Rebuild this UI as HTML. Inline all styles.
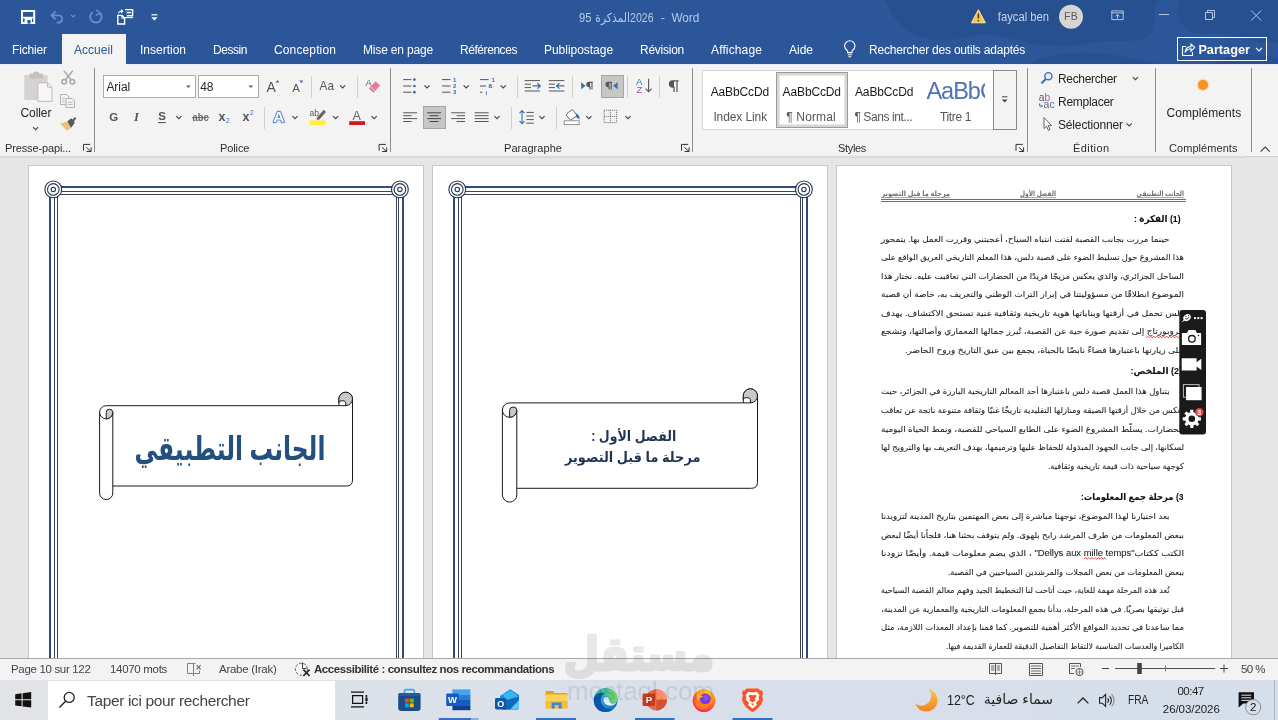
<!DOCTYPE html>
<html lang="fr">
<head>
<meta charset="utf-8">
<title>Word</title>
<style>
*{box-sizing:border-box;margin:0;padding:0}
html,body{width:1278px;height:720px;overflow:hidden;background:#e6e6e6}
body{will-change:transform;position:relative;font-family:"Liberation Sans","DejaVu Sans",sans-serif;font-size:13px;color:#262626}
.abs{position:absolute}
.t{position:absolute;white-space:nowrap;line-height:1}
svg{position:absolute;overflow:visible}
/* title bar */
#title{left:0;top:0;width:1278px;height:64px;background:#2b579a}
.tab{position:absolute;top:42px;color:#fff;font-size:12px;line-height:16px;white-space:nowrap}
#acc{left:62px;top:34px;width:64px;height:31px;background:#f3f3f3}
/* ribbon */
#ribbon{left:0;top:64px;width:1278px;height:92px;background:#f3f3f3}
#ribshadow{left:0;top:155px;width:1245px;height:3px;background:linear-gradient(#f0f0f0,#cfcfcf)}
.vsep{position:absolute;width:1px;background:#8e8e8e}
.sep{position:absolute;width:1px;background:#d0d0d0;height:22px}
.glabel{position:absolute;top:141px;font-size:11px;line-height:14px;color:#2e2e2e;white-space:nowrap}
.rt{position:absolute;font-size:12px;line-height:14px;color:#262626;white-space:nowrap}
.sty{color:#1a1a1a}
.stl{color:#555}
/* doc */
.page{position:absolute;top:165px;width:396px;height:495px;background:#fff;border:1px solid #c8c8c8}
/* status */
#status{left:0;top:659px;width:1278px;height:21px;background:#f3f3f3}
.st{position:absolute;top:662px;font-size:11.5px;line-height:14px;color:#444;white-space:nowrap}
/* taskbar */
#task{left:0;top:680px;width:1278px;height:40px;background:linear-gradient(90deg,#e2e3e6 0,#dce1e9 30%,#d8dfea 60%,#d6deea 100%)}
</style>
</head>
<body>
<!-- TITLE BAR -->
<div id="title" class="abs"></div>
<svg class="abs" style="left:0;top:0" width="1278" height="64" viewBox="0 0 1278 64">
<!-- decorative swirls -->
<g fill="#234a88" opacity="0.5">
<path d="M885 0C892 18 905 36 935 40C960 43 975 30 1000 36C1030 44 1060 50 1090 43C1112 38 1140 46 1150 34C1158 24 1150 8 1160 0Z"/>
<path d="M1180 0C1172 20 1185 37 1210 34C1235 31 1250 46 1278 42V0Z"/>
<path d="M1030 64C1045 52 1090 50 1120 56C1140 60 1152 62 1160 64Z"/>
<path d="M1215 64C1225 54 1255 52 1278 58V64Z"/>
</g>
<!-- save -->
<path d="M22 11H34.2V23H22Z" fill="none" stroke="#fff" stroke-width="2"/>
<rect x="23" y="16.8" width="10.2" height="1.6" fill="#fff"/>
<rect x="24.6" y="18" width="7.4" height="5.4" fill="#fff"/><rect x="27.4" y="20" width="3.2" height="3.6" fill="#2b579a"/>
<!-- undo / redo (disabled) -->
<g fill="none" stroke="#6a8dcb" stroke-width="1.9">
<path d="M52 15.4H58.6A3.6 3.6 0 0 1 58.6 22.6H56.6"/>
<path d="M55.6 11.4L51.6 15.4L55.6 19.4"/>
<path d="M71 14.8L73.2 17L75.4 14.8" stroke-width="1.2"/>
<path d="M100.4 13.4A5.7 5.7 0 1 1 92.6 12.2"/>
<path d="M96.2 9.8L100.6 13.2L95.8 15.2" stroke-width="1.6"/>
</g>
<!-- touch/mouse mode icon -->
<g fill="none" stroke="#fff" stroke-width="1.4">
<path d="M125 9.6H132.6V15.8H126.8"/>
<path d="M126.6 12.6H131" stroke-width="1.6"/>
<path d="M117.8 15.4H122L124.6 18V24H117.8Z" fill="#2b579a"/>
<path d="M121.8 15.6V18.2H124.4" stroke-width="1"/>
<path d="M118.6 13.6C118.6 11.8 120 11 122.4 11.2M121 9.6L122.8 11.2L121 12.8" stroke-width="1.1"/>
<path d="M125 17.6H133" stroke-width="1.1"/>
</g>
<!-- customize -->
<path d="M151.4 14.8H157.4" stroke="#fff" stroke-width="1.2"/>
<path d="M151.2 17.2H157.6L154.4 20.4Z" fill="#fff"/>
<!-- title -->
<g font-family="'Liberation Sans','DejaVu Sans',sans-serif" font-size="12.5" fill="#b9c9e8">
<text x="579" y="21.9" textLength="12.4" lengthAdjust="spacingAndGlyphs">95</text>
<text x="630" y="21.9" direction="rtl" textLength="34.7" lengthAdjust="spacingAndGlyphs">المذكرة</text>
<text x="630" y="21.9" textLength="23.6" lengthAdjust="spacingAndGlyphs">2026</text>
<text x="660.8" y="21.9">-</text>
<text x="671.4" y="21.9" textLength="27.8" lengthAdjust="spacingAndGlyphs">Word</text>
<text x="997.8" y="20.6" font-size="12.5" textLength="51.2" lengthAdjust="spacingAndGlyphs" fill="#c6d2ea">faycal ben</text>
</g>
<!-- warning -->
<path d="M978.4 9.8L985.4 22.8H971.4Z" fill="#f7c353" stroke="#fbe3a6" stroke-width="1" stroke-linejoin="round"/>
<path d="M978.4 13.6V18.6M978.4 20V21.4" stroke="#4a3a10" stroke-width="1.5"/>
<!-- avatar -->
<circle cx="1071" cy="16.7" r="12" fill="#d8d4d1"/>
<text x="1071" y="20.4" font-family="'Liberation Sans',sans-serif" font-size="10.5" fill="#5a5a5a" text-anchor="middle" letter-spacing="0.3">FB</text>
<!-- ribbon display -->
<g fill="none" stroke="#b4c4e3" stroke-width="1">
<path d="M1111.8 10.9H1123.2V19.6H1111.8Z"/><path d="M1111.8 12.9H1123.2"/>
<path d="M1117.5 18.6V14.6M1115.4 16.5L1117.5 14.4L1119.6 16.5"/>
<!-- window controls -->
<path d="M1159 14.5H1169"/>
<path d="M1205.5 12.5H1212.5V19.5H1205.5Z"/><path d="M1207.5 12.5V10.5H1214.5V17.5H1212.5"/>
<path d="M1251.2 10.5L1261.2 20.5M1261.2 10.5L1251.2 20.5"/>
</g>
<!-- bulb -->
<g fill="none" stroke="#fff" stroke-width="1.1">
<path d="M847.6 52.6V51C845.6 49.6 844.6 48 844.6 46A5.2 5.2 0 0 1 855 46C855 48 854 49.6 852 51V52.6Z"/>
<path d="M847.8 54.8H851.8M848.4 56.8H851.2"/>
</g>
<!-- partager -->
<rect x="1177.5" y="37.5" width="89" height="23" fill="none" stroke="#fff" stroke-width="1"/>
<g fill="none" stroke="#fff" stroke-width="1.1">
<path d="M1186 46.5H1182.5V55.5H1192.5V52"/>
<path d="M1185 52.5C1185.5 48.5 1188 46.6 1191 46.6V44L1194.6 47.6L1191 51.2V48.8C1188.6 48.8 1186.6 49.8 1185 52.5Z"/>
<path d="M1256 47.8L1259 50.8L1262 47.8" stroke-width="1.2"/>
</g>
<text x="1198.4" y="53.6" font-family="'Liberation Sans',sans-serif" font-size="13.5" font-weight="bold" fill="#fff" textLength="51.5" lengthAdjust="spacingAndGlyphs">Partager</text>
</svg>
<!-- TABS -->
<div id="acc" class="abs"></div>
<div class="tab" style="left:12px;letter-spacing:-0.15px">Fichier</div>
<div class="tab" style="left:74px;color:#2b579a;letter-spacing:0.04px">Accueil</div>
<div class="tab" style="left:140px;letter-spacing:-0.00px">Insertion</div>
<div class="tab" style="left:213px;letter-spacing:-0.45px">Dessin</div>
<div class="tab" style="left:274px;letter-spacing:0.13px">Conception</div>
<div class="tab" style="left:363px;letter-spacing:-0.17px">Mise en page</div>
<div class="tab" style="left:460px;letter-spacing:-0.44px">Références</div>
<div class="tab" style="left:544px;letter-spacing:-0.03px">Publipostage</div>
<div class="tab" style="left:640px;letter-spacing:-0.25px">Révision</div>
<div class="tab" style="left:711px;letter-spacing:0.13px">Affichage</div>
<div class="tab" style="left:789px;letter-spacing:-0.01px">Aide</div>
<div class="tab" style="left:869px;letter-spacing:-0.21px">Rechercher des outils adaptés</div>
<!-- RIBBON -->
<div id="ribbon" class="abs"></div>
<div id="ribshadow" class="abs"></div><div class="abs" style="left:1245px;top:156px;width:33px;height:1px;background:#d0d0d0"></div>
<div class="abs" style="left:0;top:64px;width:62px;height:1px;background:#e6edf8"></div><div class="abs" style="left:126px;top:64px;width:1152px;height:1px;background:#e6edf8"></div>
<!-- group separators -->
<div class="vsep" style="left:94px;top:68px;height:84px"></div>
<div class="vsep" style="left:390px;top:68px;height:84px"></div>
<div class="vsep" style="left:692px;top:68px;height:84px"></div>
<div class="vsep" style="left:1027px;top:68px;height:84px"></div>
<div class="vsep" style="left:1155px;top:68px;height:84px"></div>
<div class="vsep" style="left:1251px;top:68px;height:84px"></div>
<!-- group labels -->
<div class="glabel" style="left:5px;letter-spacing:-0.13px">Presse-papi...</div>
<div class="glabel" style="left:220px;letter-spacing:-0.11px">Police</div>
<div class="glabel" style="left:504px;letter-spacing:0.05px">Paragraphe</div>
<div class="glabel" style="left:838px;letter-spacing:-0.33px">Styles</div>
<div class="glabel" style="left:1073px;letter-spacing:0.41px">Édition</div>
<div class="glabel" style="left:1169px;letter-spacing:0.06px">Compléments</div>
<div class="sep" style="left:310.5px;top:76px"></div>
<div class="sep" style="left:356.5px;top:76px"></div>
<div class="sep" style="left:517px;top:76px"></div>
<div class="sep" style="left:571.5px;top:76px"></div>
<div class="sep" style="left:626.5px;top:76px"></div>
<div class="sep" style="left:658.5px;top:76px"></div>
<div class="sep" style="left:264px;top:107px"></div>
<div class="sep" style="left:511px;top:107px"></div>
<div class="sep" style="left:555.5px;top:107px"></div>
<!-- clipboard -->
<div class="rt" style="left:20.5px;top:105.8px;letter-spacing:-0.09px">Coller</div>
<!-- font combos -->
<div class="abs" style="left:103px;top:75px;width:93px;height:23px;background:#fff;border:1px solid #ababab"></div>
<div class="abs" style="left:198px;top:75px;width:61px;height:23px;background:#fff;border:1px solid #ababab"></div>
<div class="rt" style="left:106.4px;top:79.6px;letter-spacing:-0.04px">Arial</div>
<div class="rt" style="left:200.3px;top:79.6px;letter-spacing:-0.18px">48</div>
<!-- selected buttons -->
<div class="abs" style="left:601px;top:75px;width:23px;height:23px;background:#c6c6c6;border:1px solid #a6a6a6"></div>
<div class="abs" style="left:423px;top:106px;width:23px;height:23px;background:#c6c6c6;border:1px solid #a6a6a6"></div>
<!-- styles gallery -->
<div class="abs" style="left:702px;top:70px;width:315px;height:60px;background:#fff;border:1px solid #d6d6d6"></div>
<div class="abs" style="left:776px;top:72px;width:72px;height:56px;background:#fff;border:1px solid #9a9a9a;box-shadow:inset 0 0 0 2.6px #d6d6d6"></div>
<div class="abs" style="left:993px;top:70px;width:24px;height:60px;background:#f3f3f3;border:1px solid #8a8a8a"></div>
<div class="rt sty" style="left:710.7px;top:84.7px;letter-spacing:-0.13px">AaBbCcDd</div>
<div class="rt sty" style="left:782.6px;top:84.7px;letter-spacing:-0.13px">AaBbCcDd</div>
<div class="rt sty" style="left:855px;top:84.7px;letter-spacing:-0.13px">AaBbCcDd</div>
<div class="rt" style="left:926.4px;top:76.5px;font-size:23.5px;line-height:28px;color:#4f72b3;width:59px;overflow:hidden;letter-spacing:-1px">AaBbC</div>
<div class="rt stl" style="left:713.4px;top:109.5px;letter-spacing:-0.10px">Index Link</div>
<div class="rt stl" style="left:786.3px;top:109.5px;letter-spacing:0.13px">¶ Normal</div>
<div class="rt stl" style="left:854.4px;top:109.5px;letter-spacing:-0.42px">¶ Sans int...</div>
<div class="rt stl" style="left:940px;top:109.5px;letter-spacing:-0.34px">Titre 1</div>
<!-- edition -->
<div class="rt" style="left:1058px;top:71.5px;letter-spacing:-0.34px">Rechercher</div>
<div class="rt" style="left:1058px;top:94.8px;letter-spacing:-0.28px">Remplacer</div>
<div class="rt" style="left:1058px;top:117.6px;letter-spacing:-0.16px">Sélectionner</div>
<!-- complements -->
<div class="abs" style="left:1198px;top:80px;width:10px;height:10px;border-radius:50%;background:#f7941d;box-shadow:0 0 2px #f7941d"></div>
<div class="rt" style="left:1166.5px;top:106px;letter-spacing:0.07px">Compléments</div>
<svg class="abs" style="left:0;top:64px" width="1278" height="94" viewBox="0 64 1278 94">
<g font-family="'Liberation Sans',sans-serif">
<rect x="24.2" y="75" width="23.4" height="25" rx="1.2" fill="#d6d2d2"/>
<path d="M29.6 73.6H33.4V72.6A1 1 0 0 1 34.4 71.8H38A1 1 0 0 1 39 72.6V73.6H42.8V78.4H29.6Z" fill="#c4c0c0"/>
<path d="M37.8 82.8H47.6L52 87.2V101.4H37.8Z" fill="#f7f5f5" stroke="#bdbaba" stroke-width="1"/>
<path d="M47.6 82.8V87.2H52" fill="none" stroke="#bdbaba" stroke-width="1"/>
<path d="M33.0 127.10000000000001L35.6 129.70000000000002L38.2 127.10000000000001" fill="none" stroke="#444" stroke-width="1.1"/>
<g fill="none" stroke="#aaa7a7" stroke-width="1.5"><path d="M63.8 70.6L71.2 80M72.8 70.6L65.4 80"/><circle cx="64.2" cy="81.8" r="2.3"/><circle cx="72.4" cy="81.8" r="2.3"/></g>
<g fill="#f5f3f3" stroke="#b3b0b0" stroke-width="1"><path d="M60.5 94.5H66.5L69 97V104.5H60.5Z"/><path d="M62 98H65M62 100H64.5M62 102H64.5" stroke="#c2bfbf"/><path d="M66 98.5H72L74.6 101.2V107.5H66Z"/><path d="M67.8 102.4H72.8M67.8 104.6H72.8" stroke="#bdbaba"/></g>
<path d="M67.2 121.4L71.2 118.2L72.6 119.6L75 117L76.4 118.6L73.8 121.2L74.8 122.8L71 128Z" fill="#5c5a5a"/>
<path d="M60 123.5L67.2 121.4L71 128L67 130.7Z" fill="#e9c27c"/>
<path d="M83.5 150.7V144.4H90.2M86.4 147.4L91.0 151.4M91.1 147.3V151.5H86.6" fill="none" stroke="#333" stroke-width="1"/>
<path d="M185.8 85.4H190.8L188.3 88Z" fill="#666"/><path d="M248.4 85.4H253.4L250.9 88Z" fill="#666"/>
<text x="266.6" y="92.2" font-size="14" fill="#555">A</text><path d="M275.4 82.6H279.6L277.5 80Z" fill="#3a6db3"/>
<text x="292.2" y="92.2" font-size="11.5" fill="#555">A</text><path d="M299.2 80.4H303.4L301.3 83Z" fill="#3a6db3"/>
<text x="319.6" y="89.8" font-size="13" fill="#555" textLength="14.4" lengthAdjust="spacingAndGlyphs">Aa</text><path d="M340.0 85.3L342.6 87.89999999999999L345.20000000000005 85.3" fill="none" stroke="#444" stroke-width="1.1"/>
<text x="365.6" y="86.4" font-size="9.5" fill="#666">A</text>
<path d="M375.6 81.2L380.2 85.4L373.4 92.8L368.8 88.6Z" fill="#e9799c"/><path d="M370.6 86.8L375 91" stroke="#f6c6d4" stroke-width="1"/>
<text x="109.2" y="121" font-size="11.5" font-weight="bold" fill="#555">G</text>
<text x="134" y="121" font-size="12.5" font-style="italic" font-weight="bold" font-family="'Liberation Serif',serif" fill="#555">I</text>
<text x="158.2" y="120.4" font-size="11.5" font-weight="bold" fill="#555">S</text><path d="M158 122.6H165.8" stroke="#555" stroke-width="1.1"/><path d="M176.20000000000002 116.10000000000001L178.8 118.7L181.4 116.10000000000001" fill="none" stroke="#444" stroke-width="1.1"/>
<text x="192.6" y="121" font-size="11" font-weight="bold" fill="#6a6a6a" textLength="16" lengthAdjust="spacingAndGlyphs">abc</text><path d="M192 117.6H209.2" stroke="#6a6a6a" stroke-width="1"/>
<text x="218.4" y="121" font-size="12.5" font-weight="bold" fill="#555">x</text><text x="226" y="123.4" font-size="6.5" fill="#3a6db3">2</text>
<text x="242.4" y="121" font-size="12.5" font-weight="bold" fill="#555">x</text><text x="250" y="115.4" font-size="6.5" fill="#3a6db3">2</text>
<text x="273.2" y="122.4" font-size="15.5" font-weight="bold" fill="none" stroke="#a9c8ee" stroke-width="3.4" opacity="0.6" stroke-linejoin="round">A</text><text x="273.2" y="122.4" font-size="15.5" font-weight="bold" fill="#fff" stroke="#3f76c2" stroke-width="1.5" stroke-linejoin="round" style="paint-order:stroke">A</text><path d="M292.4 116.10000000000001L295 118.7L297.6 116.10000000000001" fill="none" stroke="#444" stroke-width="1.1"/>
<text x="309.6" y="116.4" font-size="8.5" fill="#555">ab</text>
<path d="M323.8 109.8L326 112L319.4 119.4L316.6 120L317.2 117.2Z" fill="#666"/>
<rect x="309.6" y="120.4" width="15.6" height="4.8" fill="#ffef3a"/><path d="M333.0 116.10000000000001L335.6 118.7L338.20000000000005 116.10000000000001" fill="none" stroke="#444" stroke-width="1.1"/>
<text x="352.4" y="120" font-size="12.5" fill="#666">A</text><rect x="349.2" y="121.2" width="15.8" height="3.8" fill="#d0191f"/><path d="M371.59999999999997 116.10000000000001L374.2 118.7L376.8 116.10000000000001" fill="none" stroke="#444" stroke-width="1.1"/>
<path d="M379.1 150.7V144.4H385.8M382.0 147.4L386.6 151.4M386.7 147.3V151.5H382.2" fill="none" stroke="#333" stroke-width="1"/>
<path d="M403.2 79.6H411.4M403.2 86H411.4M403.2 92.2H411.4" fill="none" stroke="#555" stroke-width="1"/>
<circle cx="414.4" cy="79.6" r="1.35" fill="#3a6db3"/><circle cx="414.4" cy="86" r="1.35" fill="#3a6db3"/><circle cx="414.4" cy="92.2" r="1.35" fill="#3a6db3"/><path d="M424.4 85.3L427 87.89999999999999L429.6 85.3" fill="none" stroke="#444" stroke-width="1.1"/>
<path d="M442 79.6H450.6M442 86H450.6M442 92.2H450.6" fill="none" stroke="#555" stroke-width="1"/>
<text x="453" y="81.8" font-size="6" font-weight="bold" fill="#3a6db3">1</text><text x="453" y="88.2" font-size="6" font-weight="bold" fill="#3a6db3">2</text><text x="453" y="94.4" font-size="6" font-weight="bold" fill="#3a6db3">3</text><path d="M463.59999999999997 85.3L466.2 87.89999999999999L468.8 85.3" fill="none" stroke="#444" stroke-width="1.1"/>
<path d="M480 79.6H488.6M480 86H486M480 92.2H482.4" fill="none" stroke="#555" stroke-width="1"/>
<text x="491.4" y="82" font-size="6" font-weight="bold" fill="#3a6db3">1</text><text x="488.6" y="88.4" font-size="6.5" font-weight="bold" fill="#3a6db3">a</text><text x="485.4" y="94.6" font-size="6" font-weight="bold" fill="#3a6db3">i</text><path d="M500.59999999999997 85.3L503.2 87.89999999999999L505.8 85.3" fill="none" stroke="#444" stroke-width="1.1"/>
<path d="M524.6 80.6H540M524.6 84.2H531M524.6 87.6H531M524.6 91H540" fill="none" stroke="#555" stroke-width="1"/>
<path d="M532.4 85.9H540M537.4 83.2L540.2 85.9L537.4 88.6" fill="none" stroke="#3a6db3" stroke-width="1.3"/>
<path d="M548.8 80.6H564.4M548.8 84.2H555M548.8 87.6H555M548.8 91H564.4" fill="none" stroke="#555" stroke-width="1"/>
<path d="M556.6 85.9H564.4M559.4 83.2L556.6 85.9L559.4 88.6" fill="none" stroke="#3a6db3" stroke-width="1.3"/>
<path d="M581.2 82.2L585.6 85.7L581.2 89.2Z" fill="#3a6db3"/>
<path d="M592.8 82.4H589A2.2 2.2 0 0 0 589 86.8H590V89.6M592 82.4V89.6" fill="none" stroke="#555" stroke-width="1.1"/><path d="M589 82.6A2 2 0 0 0 589 86.6H590V82.6Z" fill="#555"/>
<path d="M612 82.4H608.2A2.2 2.2 0 0 0 608.2 86.8H609.2V89.6M611.2 82.4V89.6" fill="none" stroke="#555" stroke-width="1.1"/><path d="M608.2 82.6A2 2 0 0 0 608.2 86.6H609.2V82.6Z" fill="#555"/>
<path d="M617.6 82.2L613.2 85.7L617.6 89.2Z" fill="#3a6db3"/>
<text x="636" y="85.2" font-size="9.5" fill="#3a6db3">A</text><text x="636.4" y="93.2" font-size="9.5" fill="#9a55a8">Z</text>
<path d="M648.6 78.8V91.6M645.6 88.6L648.6 91.8L651.6 88.6" fill="none" stroke="#555" stroke-width="1.1"/>
<path d="M678.6 80.8H672.6A3.2 3.2 0 0 0 672.6 87.2H674V92M677 80.8V92" fill="none" stroke="#555" stroke-width="1.2"/><path d="M672.6 81A3 3 0 0 0 672.6 87H674V81Z" fill="#555"/>
<path d="M403.2 112.8H417M403.2 115.7H411.6M403.2 118.6H417M403.2 121.5H411.6" fill="none" stroke="#555" stroke-width="1"/>
<path d="M427.2 112.8H441M429.6 115.7H438.6M427.2 118.6H441M429.6 121.5H438.6" fill="none" stroke="#444" stroke-width="1"/>
<path d="M451.2 112.8H465M456.6 115.7H465M451.2 118.6H465M456.6 121.5H465" fill="none" stroke="#555" stroke-width="1"/>
<path d="M474.6 112.8H488.6M474.6 115.7H488.6M474.6 118.6H488.6M474.6 121.5H488.6" fill="none" stroke="#555" stroke-width="1"/><path d="M494.4 116.10000000000001L497 118.7L499.6 116.10000000000001" fill="none" stroke="#444" stroke-width="1.1"/>
<path d="M522 110.8V123.6M519.6 113.2L522 110.6L524.4 113.2M519.6 121.2L522 123.8L524.4 121.2" fill="none" stroke="#3a6db3" stroke-width="1.1"/>
<path d="M526.4 112.4H533.8M526.4 116H533.8M526.4 119.6H533.8M526.4 123.2H533.8" fill="none" stroke="#555" stroke-width="1"/><path d="M539.4 116.10000000000001L542 118.7L544.6 116.10000000000001" fill="none" stroke="#444" stroke-width="1.1"/>
<path d="M568.4 112.4L572.6 109.6L577.2 115.6L570.4 120.2L566.2 115Z" fill="#fff" stroke="#666" stroke-width="1"/>
<path d="M576.4 113.2C578.6 114.6 580 116.6 579.6 119.6C578.4 118.4 577.4 117.6 576 117.2Z" fill="#3a6db3"/>
<rect x="564.2" y="120.8" width="15" height="3.8" fill="#fff" stroke="#888" stroke-width="0.9"/><path d="M586.1999999999999 116.10000000000001L588.8 118.7L591.4 116.10000000000001" fill="none" stroke="#444" stroke-width="1.1"/>
<path d="M604.2 110.2H616.6V122.6H604.2ZM610.4 110.2V122.6M604.2 116.4H616.6" fill="none" stroke="#666" stroke-width="1" stroke-dasharray="1 1"/><path d="M625.4 116.10000000000001L628 118.7L630.6 116.10000000000001" fill="none" stroke="#444" stroke-width="1.1"/>
<path d="M681.5 150.7V144.4H688.2M684.4 147.4L689.0 151.4M689.1 147.3V151.5H684.6" fill="none" stroke="#333" stroke-width="1"/>
<path d="M1002 96.8H1007.4" stroke="#444" stroke-width="1"/><path d="M1001.8 99.4H1007.6L1004.7 102.4Z" fill="#444"/>
<path d="M1016.0 150.7V144.4H1022.7M1018.9 147.4L1023.5 151.4M1023.6 147.3V151.5H1019.1" fill="none" stroke="#333" stroke-width="1"/>
<circle cx="1048.4" cy="76.2" r="3.6" fill="#e4eefa" stroke="#3a6db3" stroke-width="1.4"/><path d="M1045.8 79L1041.4 83.4" stroke="#3a6db3" stroke-width="2"/><path d="M1132.8000000000002 77.10000000000001L1135.4 79.7L1138.0 77.10000000000001" fill="none" stroke="#444" stroke-width="1.1"/>
<text x="1038.8" y="100.6" font-size="10.5" fill="#5a5a5a" textLength="11.4" lengthAdjust="spacingAndGlyphs">a<tspan fill="#9a5fb0">b</tspan></text><text x="1043.6" y="108.4" font-size="10.5" fill="#6a5a5a" textLength="11" lengthAdjust="spacingAndGlyphs">a<tspan fill="#3a6db3">c</tspan></text><path d="M1039.6 103.4V106H1042.2M1041 104.6L1042.4 106L1041 107.4" fill="none" stroke="#3a6db3" stroke-width="0.9"/>
<path d="M1044 117.6V128.6L1046.6 126.2L1048.4 130.4L1050 129.6L1048.2 125.6H1051.6Z" fill="#fff" stroke="#555" stroke-width="0.9"/><path d="M1126.6000000000001 123.3L1129.2 125.89999999999999L1131.8 123.3" fill="none" stroke="#444" stroke-width="1.1"/>
<path d="M1260.6 151.6L1265.2 147L1269.8 151.6" fill="none" stroke="#444" stroke-width="1.1"/>
</g></svg>

<!-- DOC -->
<div class="page" style="left:28px" id="p1"></div>
<div class="page" style="left:432px" id="p2"></div>
<div class="page" style="left:836px" id="p3"></div>
<svg class="abs" style="left:0;top:0" width="1278" height="660" viewBox="0 0 1278 660">
<g fill="none">
<path d="M50 665V187H403V665" stroke="#2f4b7b" stroke-width="2"/>
<path d="M54.5 665V191.5H398.5V665" stroke="#3a4358" stroke-width="1"/>
<path d="M57.5 665V194.5H396.5V665" stroke="#3a4358" stroke-width="1"/>
<circle cx="53.3" cy="189.4" r="8.4" fill="#fff" stroke="#283552" stroke-width="1.1"/>
<circle cx="53.3" cy="189.4" r="5.8" stroke="#283552" stroke-width="1.1"/>
<circle cx="53.3" cy="189.4" r="2.2" stroke="#283552" stroke-width="1.1"/>
<circle cx="399.9" cy="189.4" r="8.4" fill="#fff" stroke="#283552" stroke-width="1.1"/>
<circle cx="399.9" cy="189.4" r="5.8" stroke="#283552" stroke-width="1.1"/>
<circle cx="399.9" cy="189.4" r="2.2" stroke="#283552" stroke-width="1.1"/>
</g>
<g fill="none">
<path d="M454 665V187H807V665" stroke="#2f4b7b" stroke-width="2"/>
<path d="M458.5 665V191.5H802.5V665" stroke="#3a4358" stroke-width="1"/>
<path d="M461.5 665V194.5H800.5V665" stroke="#3a4358" stroke-width="1"/>
<circle cx="457.3" cy="189.4" r="8.4" fill="#fff" stroke="#283552" stroke-width="1.1"/>
<circle cx="457.3" cy="189.4" r="5.8" stroke="#283552" stroke-width="1.1"/>
<circle cx="457.3" cy="189.4" r="2.2" stroke="#283552" stroke-width="1.1"/>
<circle cx="803.9" cy="189.4" r="8.4" fill="#fff" stroke="#283552" stroke-width="1.1"/>
<circle cx="803.9" cy="189.4" r="5.8" stroke="#283552" stroke-width="1.1"/>
<circle cx="803.9" cy="189.4" r="2.2" stroke="#283552" stroke-width="1.1"/>
</g>
<g fill="#fff" stroke="#1a1a1a" stroke-width="1">
<path d="M106.2 405.7H338.9V399.0A6.8 6.8 0 1 1 352.5 399.0V480Q352.5 486 346.5 486H112.8V493.0A6.6 6.6 0 0 1 99.6 493.0V412.3A6.6 6.6 0 0 1 106.2 405.7Z"/>
<path d="M338.9 399.0A6.8 6.8 0 1 1 352.5 399.0A6.8 6.8 0 0 1 345.7 405.7V402.6A3.40 1.9 0 0 0 338.9 402.6Z" fill="#c9c9c9"/>
<path d="M338.9 405.7H345.7" fill="none"/>
<path d="M99.6 412.3A6.6 6.6 0 0 0 112.8 412.3" fill="none"/>
<path d="M112.8 412.3V486" fill="none"/>
<path d="M106.2 418.9V412.6A3.30 3.4 0 0 1 112.8 412.6A6.6 6.6 0 0 1 106.2 418.9Z" fill="#c9c9c9"/>
</g>
<g fill="#fff" stroke="#1a1a1a" stroke-width="1">
<path d="M509.6 402.9H743.3V395.9A7.1 7.1 0 1 1 757.5 395.9V482.3Q757.5 488.3 751.5 488.3H516.8V494.9A7.2 7.2 0 0 1 502.4 494.9V410.1A7.2 7.2 0 0 1 509.6 402.9Z"/>
<path d="M743.3 395.9A7.1 7.1 0 1 1 757.5 395.9A7.1 7.1 0 0 1 750.4 402.9V399.5A3.55 1.9 0 0 0 743.3 399.5Z" fill="#c9c9c9"/>
<path d="M743.3 402.9H750.4" fill="none"/>
<path d="M502.4 410.1A7.2 7.2 0 0 0 516.8 410.1" fill="none"/>
<path d="M516.8 410.1V488.3" fill="none"/>
<path d="M509.6 417.3V410.4A3.60 3.4 0 0 1 516.8 410.4A7.2 7.2 0 0 1 509.6 417.3Z" fill="#c9c9c9"/>
</g>
<g font-family="'Liberation Sans','DejaVu Sans',sans-serif" font-weight="bold" direction="rtl">
<text x="325.4" y="460" font-size="33" fill="#24507f" textLength="191" lengthAdjust="spacingAndGlyphs">الجانب التطبيقي</text>
<text x="676.2" y="440.8" font-size="14" fill="#1f3556" textLength="85" lengthAdjust="spacingAndGlyphs">الفصل الأول :</text>
<text x="700.4" y="462" font-size="14" fill="#1f3556" textLength="135.4" lengthAdjust="spacingAndGlyphs">مرحلة ما قبل التصوير</text>
</g>
</svg>
<svg class="abs" style="left:0;top:0" width="1278" height="660" viewBox="0 0 1278 660">
<g font-family="'Liberation Sans','DejaVu Sans',sans-serif" direction="rtl" fill="#1c1c1c" stroke="#1c1c1c" stroke-width="0.07">
<text x="1184" y="196.2" font-size="7.3" font-weight="bold" fill="#707070" stroke="none" textLength="47.5" lengthAdjust="spacingAndGlyphs">الجانب التطبيقي</text>
<text x="1056" y="196.2" font-size="7.3" font-weight="bold" fill="#707070" stroke="none" textLength="36.0" lengthAdjust="spacingAndGlyphs">الفصل الأول</text>
<text x="950" y="196.2" font-size="7.3" font-weight="bold" fill="#707070" stroke="none" textLength="68.5" lengthAdjust="spacingAndGlyphs">مرحلة ما قبل التصوير</text>
<path d="M881 199.5H1186M881 201.5H1186" stroke="#5e5e5e" stroke-width="0.9" fill="none"/><path d="M1136.5 197.6H1184M1020 197.6H1056M881.5 197.6H950" stroke="#808080" stroke-width="0.7" fill="none"/>
<text x="1180.6" y="221.9" font-size="9.4" font-weight="bold" fill="#111" textLength="46.6" lengthAdjust="spacingAndGlyphs">(1)  الفكرة :</text>
<text x="1169.5" y="241.9" font-size="8.2" textLength="288.5" lengthAdjust="spacingAndGlyphs">حينما مررت بجانب القصبة لفتت انتباه السياح، أعجبتني وقررت العمل بها. يتمحور</text>
<text x="1184" y="260.3" font-size="8.2" textLength="303.0" lengthAdjust="spacingAndGlyphs">هذا المشروع حول تسليط الضوء على قصبة دلس، هذا المعلم التاريخي العريق الواقع على</text>
<text x="1184" y="278.8" font-size="8.2" textLength="303.0" lengthAdjust="spacingAndGlyphs">الساحل الجزائري، والذي يعكس مزيجًا فريدًا من الحضارات التي تعاقبت عليه. نختار هذا</text>
<text x="1184" y="297.3" font-size="8.2" textLength="303.0" lengthAdjust="spacingAndGlyphs">الموضوع انطلاقًا من مسؤوليتنا في إبراز التراث الوطني والتعريف به، خاصة أن قصبة</text>
<text x="1184" y="315.8" font-size="8.2" textLength="303.0" lengthAdjust="spacingAndGlyphs">دلس تحمل في أزقتها وبناياتها هوية تاريخية وثقافية غنية تستحق الاكتشاف. يهدف</text>
<text x="1184" y="334.3" font-size="8.2" textLength="303.0" lengthAdjust="spacingAndGlyphs">الروبورتاج إلى تقديم صورة حية عن القصبة، تُبرز جمالها المعماري وأصالتها، وتشجع</text>
<text x="1184" y="353.0" font-size="8.2" textLength="279.0" lengthAdjust="spacingAndGlyphs">على زيارتها باعتبارها فضاءً نابضًا بالحياة، يجمع بين عبق التاريخ وروح الحاضر.</text>
<text x="1182" y="374.4" font-size="9.4" font-weight="bold" fill="#111" textLength="51.4" lengthAdjust="spacingAndGlyphs">(2) الملخص:</text>
<text x="1169.5" y="394.4" font-size="8.2" textLength="288.5" lengthAdjust="spacingAndGlyphs">يتناول هذا العمل قصبة دلس باعتبارها أحد المعالم التاريخية البارزة في الجزائر، حيث</text>
<text x="1184" y="413.0" font-size="8.2" textLength="303.0" lengthAdjust="spacingAndGlyphs">تعكس من خلال أزقتها الضيقة ومنازلها التقليدية تاريخًا غنيًا وثقافة متنوعة ناتجة عن تعاقب</text>
<text x="1184" y="431.5" font-size="8.2" textLength="303.0" lengthAdjust="spacingAndGlyphs">الحضارات. يسلّط المشروع الضوء على الطابع السياحي للقصبة، ونمط الحياة اليومية</text>
<text x="1184" y="450.0" font-size="8.2" textLength="303.0" lengthAdjust="spacingAndGlyphs">لسكانها، إلى جانب الجهود المبذولة للحفاظ عليها وترميمها، بهدف التعريف بها والترويج لها</text>
<text x="1184" y="468.5" font-size="8.2" textLength="136.0" lengthAdjust="spacingAndGlyphs">كوجهة سياحية ذات قيمة تاريخية وثقافية.</text>
<text x="1183.5" y="500" font-size="9.4" font-weight="bold" fill="#111" textLength="102.5" lengthAdjust="spacingAndGlyphs">3) مرحلة جمع المعلومات:</text>
<text x="1169.5" y="519" font-size="8.2" textLength="288.5" lengthAdjust="spacingAndGlyphs">بعد اختيارنا لهذا الموضوع، توجهنا مباشرة إلى بعض المهتمين بتاريخ المدينة لتزويدنا</text>
<text x="1184" y="537.5" font-size="8.2" textLength="303.0" lengthAdjust="spacingAndGlyphs">ببعض المعلومات من طرف المرشد رابح بلهوى. ولم يتوقف بحثنا هنا، فلجأنا أيضًا لبعض</text>
<text x="1184" y="556" font-size="8.2" textLength="303.0" lengthAdjust="spacingAndGlyphs">الكتب ككتاب"Dellys aux mille temps" ، الذي يضم معلومات قيمة. وأيضًا تزودنا</text>
<text x="1184" y="574.5" font-size="8.2" textLength="236.0" lengthAdjust="spacingAndGlyphs">ببعض المعلومات من بعض المجلات والمرشدين السياحيين في القصبة.</text>
<text x="1169.5" y="593" font-size="8.2" textLength="288.5" lengthAdjust="spacingAndGlyphs">تُعد هذه المرحلة مهمة للغاية، حيث أتاحت لنا التخطيط الجيد وفهم معالم القصبة السياحية</text>
<text x="1184" y="611.5" font-size="8.2" textLength="303.0" lengthAdjust="spacingAndGlyphs">قبل توثيقها بصريًا. في هذه المرحلة، بدأنا بجمع المعلومات التاريخية والمعمارية عن المدينة،</text>
<text x="1184" y="630" font-size="8.2" textLength="303.0" lengthAdjust="spacingAndGlyphs">مما ساعدنا في تحديد المواقع الأكثر أهمية للتصوير. كما قمنا بإعداد المعدات اللازمة، مثل</text>
<text x="1184" y="648.5" font-size="8.2" textLength="238.0" lengthAdjust="spacingAndGlyphs">الكاميرا والعدسات المناسبة لالتقاط التفاصيل الدقيقة للعمارة القديمة فيها.</text>
</g>
<path d="M1146 337.8L1147.6 336.2L1149.2 337.8L1150.8 336.2L1152.4 337.8L1154.0 336.2L1155.6 337.8L1157.2 336.2L1158.8 337.8L1160.4 336.2L1162.0 337.8L1163.6 336.2L1165.2 337.8L1166.8 336.2L1168.4 337.8L1170.0 336.2L1171.6 337.8L1173.2 336.2L1174.8 337.8L1176.4 336.2L1178.0 337.8L1179.6 336.2L1181.2 337.8" stroke="#e2322e" stroke-width="0.9" fill="none"/>
<path d="M1084 559.2L1085.6 557.6L1087.2 559.2L1088.8 557.6L1090.4 559.2L1092.0 557.6L1093.6 559.2L1095.2 557.6L1096.8 559.2L1098.4 557.6L1100.0 559.2L1101.6 557.6L1103.2 559.2L1104.8 557.6L1106.4 559.2" stroke="#e2322e" stroke-width="0.9" fill="none"/>
</svg>
<svg class="abs" style="left:0;top:0" width="1278" height="660" viewBox="0 0 1278 660">
<rect x="1179.3" y="310" width="26.7" height="124.5" rx="3" fill="#1b1a1a"/>
<g fill="#fff">
<ellipse cx="1187" cy="317.6" rx="4" ry="3.2" transform="rotate(-35 1187 317.6)"/>
<path d="M1182.2 321.8L1185 319.4" stroke="#fff" stroke-width="1" fill="none"/>
<path d="M1185.2 318.4C1186.4 319.6 1188.4 319 1189 317" stroke="#1b1a1a" stroke-width="0.9" fill="none"/>
<circle cx="1186" cy="316.4" r="0.6" fill="#1b1a1a"/><circle cx="1188.6" cy="315.6" r="0.6" fill="#1b1a1a"/>
<rect x="1194" y="317.1" width="2" height="2"/><rect x="1197.3" y="317.1" width="2" height="2"/><rect x="1200.6" y="317.1" width="2" height="2"/>
<path d="M1181.9 333.1H1187L1188.6 330.1H1195.4L1197 333.1H1201.1V345H1181.9Z"/>
<circle cx="1191.9" cy="338.8" r="3.3" fill="#fff" stroke="#1b1a1a" stroke-width="1.3"/>
<rect x="1197.8" y="335" width="1.4" height="1.2" fill="#1b1a1a"/>
<path d="M1181.7 358.3H1196.6V362.3L1201.3 358.8V370L1196.6 366.6V370.5H1181.7Z"/>
<rect x="1183.4" y="384.6" width="15.6" height="12.6" fill="none" stroke="#bdbdbd" stroke-width="1"/>
<rect x="1186" y="387" width="15.6" height="13.2"/>
<path d="M1200.9 417.2L1200.9 420.4L1198.4 420.4L1197.6 422.4L1199.3 424.1L1197.1 426.3L1195.4 424.6L1193.4 425.4L1193.4 427.9L1190.2 427.9L1190.2 425.4L1188.2 424.6L1186.5 426.3L1184.3 424.1L1186.0 422.4L1185.2 420.4L1182.7 420.4L1182.7 417.2L1185.2 417.2L1186.0 415.2L1184.3 413.5L1186.5 411.3L1188.2 413.0L1190.2 412.2L1190.2 409.7L1193.4 409.7L1193.4 412.2L1195.4 413.0L1197.1 411.3L1199.3 413.5L1197.6 415.2L1198.4 417.2Z"/>
<circle cx="1191.8" cy="418.8" r="3.3" fill="#1b1a1a"/>
</g>
<circle cx="1199.3" cy="412.2" r="4.3" fill="#e8403a"/>
<text x="1199.3" y="414.8" font-size="7" font-weight="bold" fill="#fff" text-anchor="middle" font-family="'Liberation Sans',sans-serif">3</text>
</svg>

<!-- STATUS -->
<div id="status" class="abs"></div>
<div class="abs" style="left:0;top:658px;width:1278px;height:1px;background:#a8a8a8"></div>
<div class="st" style="left:11px;letter-spacing:-0.33px">Page 10 sur 122</div>
<div class="st" style="left:110px;letter-spacing:-0.31px">14070 mots</div>
<div class="st" style="left:219px;letter-spacing:-0.27px">Arabe (Irak)</div>
<div class="st" style="left:314px;font-weight:bold;color:#333;letter-spacing:-0.43px">Accessibilité : consultez nos recommandations</div>
<div class="st" style="left:1241px;letter-spacing:-0.55px">50 %</div>
<svg class="abs" style="left:0;top:658px" width="1278" height="22" viewBox="0 658 1278 22">
<g fill="none" stroke="#555" stroke-width="1">
<!-- proofing icon -->
<path d="M187.5 663.5H193.5V673.5H187.5ZM193.5 663.5H195.5M193.5 673.5H199.5V670.5M193.5 673.5V676" stroke="#808080"/>
<path d="M196.6 665L200.6 669.4M200.6 665L196.6 669.4" stroke="#606060" stroke-width="1.1"/>
<!-- accessibility icon -->
<circle cx="301.4" cy="669.2" r="6" stroke-dasharray="2.6 1.6" stroke="#555"/>
<path d="M302.5 662.5V668.5H306.5" stroke="#444"/>
<path d="M303.4 669.6L309.6 676M309.6 669.6L303.4 676" stroke="#2a2a2a" stroke-width="1.7"/>
<!-- view icons -->
<path d="M989.5 663.5H995.5V673.5H989.5ZM995.5 663.5H1001.5V673.5H995.5ZM995.5 673.5V675"/>
<path d="M991 666H994.4M991 668H994.4M991 670H994.4M996.8 666H1000M996.8 668H1000M996.8 670H1000" stroke="#666"/>
<path d="M1029.5 663.5H1042.5V675.5H1029.5Z"/>
<path d="M1031 666H1041M1031 668.5H1041M1031 671H1041M1031 673.5H1041" stroke="#666"/>
<path d="M1069.5 663.5H1080.5V667M1069.5 663.5V673.5H1074"/>
<path d="M1071 666H1079M1071 668.5H1075" stroke="#777"/>
<circle cx="1079.5" cy="672" r="3.6" stroke="#555"/>
<path d="M1076.5 672H1082.5M1079.5 668.6V675.4" stroke="#777" stroke-width="0.8"/>
<!-- zoom slider -->
<path d="M1102 668.5H1109" stroke="#444"/>
<path d="M1115 668.5H1215" stroke="#505050"/>
<path d="M1165.5 665.5V671.5" stroke="#777"/>
<path d="M1220 668.5H1228M1224 664.5V672.5" stroke="#444"/>
</g>
<rect x="1137.2" y="663" width="4.6" height="11" fill="#444"/>
</svg>

<!-- TASKBAR -->
<div id="task" class="abs"></div>
<div class="abs" style="left:48px;top:681px;width:287px;height:39px;background:#fff"></div>
<div class="t" style="left:87px;top:692px;font-size:15.5px;line-height:18px;color:#444;letter-spacing:-0.36px" id="srch">Taper ici pour rechercher</div>
<div class="t" style="left:946.9px;top:692px;font-size:14px;line-height:17px;color:#222;transform:scaleX(0.89);transform-origin:0 0" id="temp">12°C</div>
<div class="t" dir="rtl" style="left:985px;top:689px;font-size:14px;line-height:20px;color:#222;width:68px;text-align:right" id="sky">سماء صافية</div>
<div class="t" style="left:1127.8px;top:693px;font-size:12px;line-height:14px;color:#222;transform:scaleX(0.85);transform-origin:0 0" id="fra">FRA</div>
<div class="t" style="left:1177.4px;top:683.6px;font-size:11.5px;line-height:14px;color:#222;letter-spacing:-0.48px" id="time">00:47</div>
<div class="t" style="left:1162.8px;top:701.5px;font-size:11.5px;line-height:14px;color:#222;letter-spacing:-0.06px" id="date">26/03/2026</div>
<svg class="abs" style="left:0;top:680px" width="1278" height="40" viewBox="0 680 1278 40">
<path d="M15.2 694.2L21.6 693.3V699.3H15.2ZM22.6 693.2L31.2 692V699.3H22.6ZM15.2 700.3H21.6V706.3L15.2 705.4ZM22.6 700.3H31.2V707.6L22.6 706.4Z" fill="#111"/>
<circle cx="69.2" cy="697.4" r="5" fill="none" stroke="#222" stroke-width="1.3"/><path d="M65.6 701.2L59.4 707.4" stroke="#222" stroke-width="1.4"/>
<g fill="none" stroke="#111" stroke-width="1.2"><path d="M352.6 695.6H362.6V703.4H352.6Z"/><path d="M351 692.2H364M351 706.8H364"/><path d="M366.4 695V697.4M366.4 701.6V704" stroke-width="1.6"/></g><rect x="365.4" y="697.8" width="2.2" height="3.2" fill="#111"/>
<path d="M404.4 693.4V691.6A2 2 0 0 1 406.4 689.6H412.4A2 2 0 0 1 414.4 691.6V693.4" fill="none" stroke="#45a6e4" stroke-width="1.6"/>
<rect x="398.2" y="693" width="22.4" height="18" rx="3.2" fill="#1c4b86"/><rect x="398.2" y="693" width="22.4" height="3" rx="1.5" fill="#235c9f"/>
<rect x="405" y="698.6" width="3.9" height="3.9" fill="#f25022"/><rect x="409.8" y="698.6" width="3.9" height="3.9" fill="#7fba00"/><rect x="405" y="703.4" width="3.9" height="3.9" fill="#00a4ef"/><rect x="409.8" y="703.4" width="3.9" height="3.9" fill="#ffb900"/>
<rect x="452.4" y="689.4" width="18" height="5.4" fill="#41a5ee"/><rect x="452.4" y="694.8" width="18" height="5.2" fill="#2b7cd3"/><rect x="452.4" y="700" width="18" height="5.2" fill="#185abd"/><rect x="452.4" y="705.2" width="18" height="5" fill="#103f91"/>
<rect x="446.2" y="693.4" width="12.6" height="12.6" rx="1.2" fill="#185abd"/>
<text x="452.5" y="703.4" font-family="'Liberation Sans',sans-serif" font-size="9.5" font-weight="bold" fill="#fff" text-anchor="middle">W</text>
<path d="M500 696L510.4 689.2L519 695V707.6A2 2 0 0 1 517 709.6H502Z" fill="#1490df"/>
<path d="M503 694.6L511 690.6L518.6 696.6L508 704Z" fill="#35b8f1"/><path d="M506 700L519 696.4V707.6A2 2 0 0 1 517 709.6H503.6Z" fill="#0f6cbd"/>
<path d="M510 709.6L519 700V707.6A2 2 0 0 1 517 709.6Z" fill="#5dc8f7"/>
<rect x="495" y="698" width="11.4" height="11.4" rx="1.4" fill="#0f5aa8"/>
<text x="500.7" y="707.2" font-family="'Liberation Sans',sans-serif" font-size="9" font-weight="bold" fill="#fff" text-anchor="middle">O</text>
<path d="M545.6 692.2A1.2 1.2 0 0 1 546.8 691H553L555 693H566.4A1.2 1.2 0 0 1 567.6 694.2V696H545.6Z" fill="#e8a317"/>
<rect x="545.6" y="694.6" width="22" height="14" rx="1" fill="#fcd25a"/><path d="M545.6 701H567.6V707.6A1 1 0 0 1 566.6 708.6H546.6A1 1 0 0 1 545.6 707.6Z" fill="#f5bd3c"/>
<path d="M551.6 708.6V702.4H561.6V708.6H558.6V705H554.6V708.6Z" fill="#3a86d8"/>
<defs><linearGradient id="eg" x1="0" y1="0" x2="1" y2="1"><stop offset="0" stop-color="#35c1b1"/><stop offset="0.5" stop-color="#2aa0d8"/><stop offset="1" stop-color="#0c5fb5"/></linearGradient><linearGradient id="eg2" x1="0" y1="0" x2="1" y2="0"><stop offset="0" stop-color="#2bb5a0"/><stop offset="1" stop-color="#7bd66a"/></linearGradient></defs>
<circle cx="605.6" cy="700" r="12" fill="url(#eg)"/>
<path d="M598 692.6C602 687.4 612 686.8 616.4 693.4C618.4 696.6 617.8 700.4 616 702.6C613 704.6 608.6 703.6 609.6 699.6C610 697.4 607.6 695 604.4 695.2C601.4 695.4 599 697 598 692.6Z" fill="url(#eg2)"/>
<path d="M594 698.6C595 693.6 601 691.6 605 693.6C601.6 695 600 698.8 601.4 703C602.8 707.2 607.4 710.2 613.6 708.4C609.6 712.8 602 713.2 597.6 709.2C594.4 706.4 593.4 702.4 594 698.6Z" fill="#0b56a8"/>
<path d="M603.6 699.4C603.4 702.6 606 706 611.4 705.6C613.6 705.4 615.6 704.2 616.6 702.6C613.6 704.6 609.2 703.8 609.4 700.2C609.6 698.2 607.6 696.4 605.6 697C604.2 697.4 603.6 698.4 603.6 699.4Z" fill="#dceefa"/>
<circle cx="656.4" cy="699.8" r="10.6" fill="#ed6c47"/><path d="M656.4 689.2A10.6 10.6 0 0 1 667 699.8H656.4Z" fill="#ff8f6b"/><path d="M656.4 699.8H667A10.6 10.6 0 0 1 656.4 710.4Z" fill="#d35230"/>
<rect x="642.6" y="693.6" width="12.4" height="12.4" rx="1.2" fill="#c43e1c"/>
<text x="648.8" y="703.4" font-family="'Liberation Sans',sans-serif" font-size="9.5" font-weight="bold" fill="#fff" text-anchor="middle">P</text>
<defs><radialGradient id="ff" cx="0.6" cy="0.25" r="0.85"><stop offset="0" stop-color="#ffe226"/><stop offset="0.45" stop-color="#ff8a16"/><stop offset="0.8" stop-color="#ff3647"/><stop offset="1" stop-color="#e31587"/></radialGradient><radialGradient id="ff2" cx="0.5" cy="0.4" r="0.6"><stop offset="0" stop-color="#9059ff"/><stop offset="1" stop-color="#6e2bd9"/></radialGradient></defs>
<circle cx="704" cy="700.6" r="11.4" fill="url(#ff)"/><circle cx="702.9" cy="701.9" r="7.6" fill="#ff7d1f"/><circle cx="705.3" cy="698.7" r="5.4" fill="url(#ff2)"/><path d="M697 693.2C699 695.6 701.6 695.4 703.4 696.4C700.6 696.8 699 698.6 698.8 700.8C697.2 699.6 696.2 696.4 697 693.2Z" fill="#ffb12a"/>
<path d="M746.6 688.4H758.4L760.2 690.6L762 690.2L763 693.2L762.2 695.6L763 699.4C762 704.6 757.6 709.4 752.5 712C747.4 709.4 743 704.6 742 699.4L742.8 695.6L742 693.2L743 690.2L744.8 690.6Z" fill="#fb542b"/>
<path d="M752.5 692.4L756.6 691.8L759.4 695L758.4 697.4L759.2 699.6L756 703L757 705L752.5 708.4L748 705L749 703L745.8 699.6L746.6 697.4L745.6 695L748.4 691.8Z" fill="#fff"/>
<path d="M752.5 695.2L755.4 694.8L756.6 696.4L754.8 698.8L755.6 700.4L752.5 702.6L749.4 700.4L750.2 698.8L748.4 696.4L749.6 694.8Z" fill="#fb542b"/><path d="M751 703.6H754L752.5 705.8Z" fill="#fb542b"/>
<rect x="438.8" y="718" width="32.599999999999966" height="2" fill="#2f6fc4"/>
<rect x="536" y="718" width="40" height="2" fill="#2f6fc4"/>
<rect x="635" y="718" width="39.5" height="2" fill="#2f6fc4"/>
<rect x="732.5" y="718" width="40.0" height="2" fill="#2f6fc4"/>
<rect x="471.4" y="718" width="7.4" height="2" fill="#8fb0dc"/>
<defs><linearGradient id="mn" x1="0" y1="0.2" x2="0" y2="0.8"><stop offset="0" stop-color="#ffc547"/><stop offset="1" stop-color="#ef8420"/></linearGradient></defs>
<mask id="mm"><rect x="900" y="680" width="50" height="40" fill="#000"/><circle cx="926.2" cy="700.2" r="11.3" fill="#fff"/><circle cx="921.4" cy="695.8" r="9.9" fill="#000"/></mask><rect x="900" y="680" width="50" height="40" fill="url(#mn)" mask="url(#mm)"/>
<path d="M1077.6 703.4L1083 698L1088.4 703.4" fill="none" stroke="#222" stroke-width="1.3"/>
<g fill="none" stroke="#222" stroke-width="1.1"><path d="M1099.6 697.6H1102.4L1105.6 694.4V706.4L1102.4 703.2H1099.6Z"/><path d="M1107.6 698.2A3.4 3.4 0 0 1 1107.6 702.6M1109.6 696.2A6 6 0 0 1 1109.6 704.6" /><path d="M1111.6 694.4A8.6 8.6 0 0 1 1111.6 706.4" stroke="#888"/></g>
<path d="M1238.6 692.2H1254V703.6H1243.4L1238.6 707.6Z" fill="#111"/><path d="M1241.4 695.2H1251.2M1241.4 697.8H1251.2M1241.4 700.4H1251.2" stroke="#dde5f0" stroke-width="1"/><path d="M1274.5 680V720" stroke="#aab3c0" stroke-width="1"/>
<circle cx="1253.2" cy="707.2" r="7.6" fill="#d9dee7" stroke="#8a8f98" stroke-width="1"/>
<text x="1253.2" y="711.2" font-family="'Liberation Sans',sans-serif" font-size="11.5" fill="#111" text-anchor="middle">2</text>
</svg>
<svg class="abs" style="left:0;top:0;z-index:50" width="1278" height="720" viewBox="0 0 1278 720">
<g fill="#000" opacity="0.085" font-family="'Liberation Sans','DejaVu Sans',sans-serif" font-weight="bold">
<text x="714.4" y="670" direction="rtl" font-size="46" textLength="151" lengthAdjust="spacingAndGlyphs" stroke="#000" stroke-width="3" stroke-linejoin="round">مستقل</text>
<text x="567" y="700" font-size="25" textLength="147" lengthAdjust="spacingAndGlyphs" font-weight="normal">mostaql.com</text>
</g>
</svg>


</body>
</html>
